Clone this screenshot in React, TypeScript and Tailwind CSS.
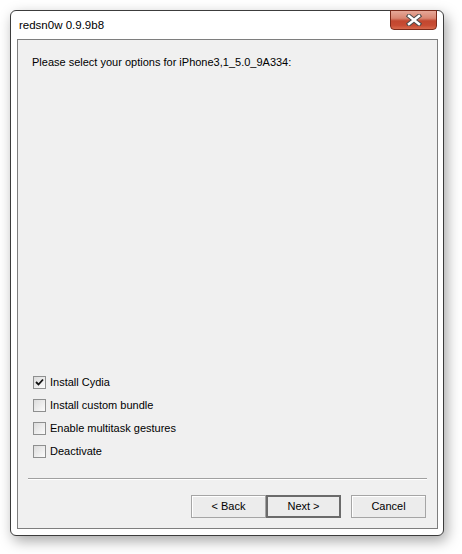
import { useState } from "react";

const options = [
  { id: "cydia", label: "Install Cydia", checked: true },
  { id: "bundle", label: "Install custom bundle", checked: false },
  { id: "multitask", label: "Enable multitask gestures", checked: false },
  { id: "deactivate", label: "Deactivate", checked: false },
];

const CloseButton = () => (
  <button className="absolute right-[6px] top-[-1px] w-[47px] h-[20px] rounded-b-[4px] border border-[#7a2a1a] bg-[linear-gradient(to_bottom,#e6a898_0%,#d98672_40%,#c2472f_55%,#c84c33_80%,#d96a4d_100%)] flex items-center justify-center">
    <svg width="16" height="12" viewBox="0 0 16 12">
      <path
        d="M3 2 L13 10 M13 2 L3 10"
        stroke="#4a4a4a"
        strokeWidth="4.5"
        strokeLinecap="square"
      />
      <path
        d="M3 2 L13 10 M13 2 L3 10"
        stroke="#ffffff"
        strokeWidth="2.5"
        strokeLinecap="square"
      />
    </svg>
  </button>
);

const Checkbox = ({ checked }: { checked: boolean }) => (
  <span className="w-[13px] h-[13px] border border-[#8e8f8f] bg-[linear-gradient(135deg,#dcdcdc,#fbfbfb)] flex items-center justify-center shrink-0">
    {checked && (
      <svg width="9" height="9" viewBox="0 0 9 9">
        <path d="M1 4 L3.5 6.5 L8 1.5" stroke="#111" strokeWidth="1.8" fill="none" />
      </svg>
    )}
  </span>
);

const WinButton = ({ label, primary }: { label: string; primary?: boolean }) => (
  <button
    className={
      primary
        ? "w-[75px] h-[23px] border-2 border-[#6b6b6b] bg-[#ececec] text-[11px] text-black"
        : "w-[75px] h-[23px] border border-[#a5a5a5] bg-[#ececec] text-[11px] text-black shadow-[inset_1px_1px_0_#fff]"
    }
  >
    {label}
  </button>
);

export default function App() {
  const [opts, setOpts] = useState(options);

  const toggle = (id: string) =>
    setOpts((prev) => prev.map((o) => (o.id === id ? { ...o, checked: !o.checked } : o)));

  return (
    <div className="w-[462px] h-[554px] bg-white pl-[10px] pt-[10px] font-['Liberation_Sans',Arial,sans-serif]">
      <div className="relative w-[434px] h-[526px] rounded-[6px] border border-[#3c3c3c] bg-white shadow-[3px_5px_14px_rgba(0,0,0,0.35)] flex flex-col pl-[6px] pr-[5px] pb-[6px]">
        {/* title bar */}
        <div className="h-[28px] flex items-center pl-[2px] pt-[2px] text-[11.5px] text-black">
          redsn0w 0.9.9b8
        </div>
        <CloseButton />

        {/* client area */}
        <div className="flex-1 border border-[#7e7e7e] bg-[#f0f0f0] flex flex-col text-[11px] text-black">
          <p className="mt-[16px] ml-[14px] leading-[13px]">
            Please select your options for iPhone3,1_5.0_9A334:
          </p>

          <div className="flex-1" />

          <div className="flex flex-col ml-[15px]">
            {opts.map((o) => (
              <label
                key={o.id}
                className="h-[23px] flex items-center gap-[4px] cursor-default"
                onClick={() => toggle(o.id)}
              >
                <Checkbox checked={o.checked} />
                {o.label}
              </label>
            ))}
          </div>

          <div className="mt-[15px] mx-[10px] border-t border-[#a0a0a0] border-b border-b-white" />

          <div className="flex justify-end mt-[15px] mb-[10px] mr-[11px]">
            <WinButton label="< Back" />
            <WinButton label="Next >" primary />
            <div className="w-[10px]" />
            <WinButton label="Cancel" />
          </div>
        </div>
      </div>
    </div>
  );
}
